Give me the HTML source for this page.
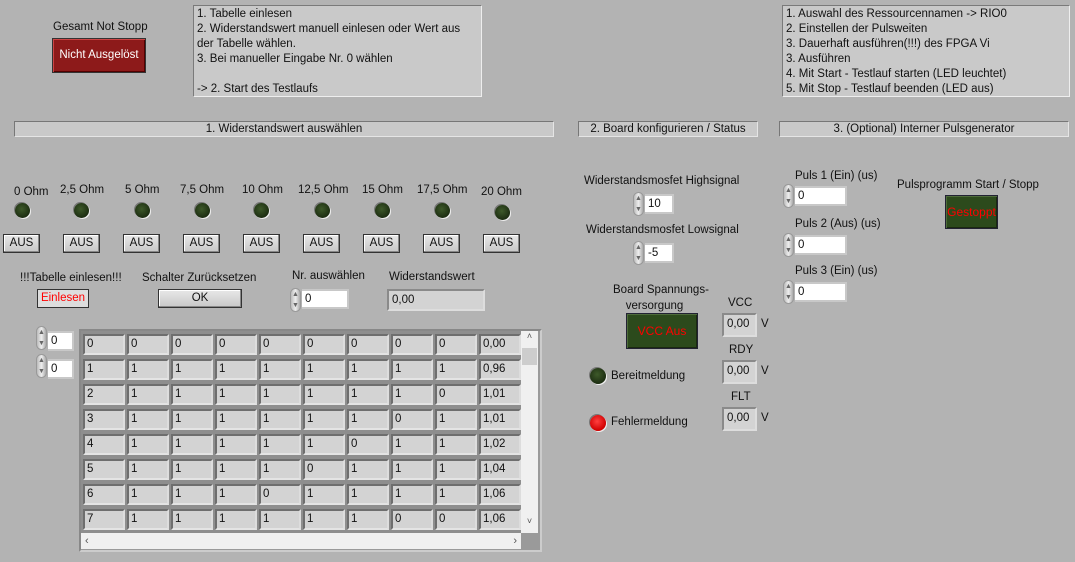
<!DOCTYPE html><html><head><meta charset="utf-8"><style>
body{margin:0;width:1075px;height:562px;background:#b3b3b3;font-family:"Liberation Sans",sans-serif;font-size:11.5px;color:#111;position:relative;overflow:hidden}
div{position:absolute;box-sizing:border-box}
.t{white-space:nowrap}
.box{background:#c9c9c9;border:1px solid #7a7a7a;border-right-color:#eee;border-bottom-color:#eee;padding:1px 3px;line-height:15px}
.hdr{background:#c9c9c9;border:1px solid #777;border-right-color:#e5e5e5;border-bottom-color:#e5e5e5;height:16px;text-align:center;line-height:14px}
.led{width:15px;height:15px;border-radius:50%;background:radial-gradient(circle at 45% 40%,#3e5a2a,#1d2e12 70%);box-shadow:1px 1px 0 #eee,-1px -1px 0 #777}
.aus{width:37px;height:19px;background:linear-gradient(#e8e8e8,#c8c8c8);border:1px solid #333;box-shadow:inset -1px -1px 0 #888,inset 1px 1px 0 #fff;text-align:center;line-height:17px}
.sp{width:11px;height:24px;border-radius:6px;background:linear-gradient(90deg,#bbb,#eee,#aaa);border:1px solid #999;font-size:7px;color:#666;text-align:center;line-height:11px}
.num{background:#fff;height:20px;border:2px solid #c8c8c8;border-left:0;padding-left:3px;line-height:17px}
.ind{background:#d3d3d3;border:2px solid #8a8a8a;border-right-color:#ddd;border-bottom-color:#ddd;height:22px;line-height:18px;padding-left:3px}
.c{width:42px;height:21px;background:#d3d3d3;border:2px solid #6e6e6e;border-right-color:#ddd;border-bottom-color:#e4e4e4;line-height:17px;padding-left:2px}
.gbtn{background:#2c4a1c;border:1px solid #223;box-shadow:inset 1px 1px 0 #4d6a3a,inset -1px -1px 0 #1a2a10;color:#f00;text-align:center;font-size:12px}
</style></head><body>
<div class="t" style="left:53px;top:21px">Gesamt Not Stopp</div>
<div style="left:52px;top:38px;width:94px;height:35px;background:#8d1a1a;border:1px solid #333;box-shadow:inset 1px 1px 0 #c44,inset -1px -1px 0 #500;color:#fff;text-align:center;line-height:33px">Nicht Ausgelöst</div>
<div class="box" style="left:193px;top:5px;width:289px;height:92px">1. Tabelle einlesen<br>2. Widerstandswert manuell einlesen oder Wert aus der Tabelle wählen.<br>3. Bei manueller Eingabe Nr. 0 wählen<br><br>-&gt; 2. Start des Testlaufs</div>
<div class="box" style="left:782px;top:5px;width:288px;height:92px">1. Auswahl des Ressourcennamen -&gt; RIO0<br>2. Einstellen der Pulsweiten<br>3. Dauerhaft ausführen(!!!) des FPGA Vi<br>3. Ausführen<br>4. Mit Start - Testlauf starten (LED leuchtet)<br>5. Mit Stop - Testlauf beenden (LED aus)</div>
<div class="hdr" style="left:14px;top:121px;width:540px">1. Widerstandswert auswählen</div>
<div class="hdr" style="left:578px;top:121px;width:180px">2. Board konfigurieren / Status</div>
<div class="hdr" style="left:779px;top:121px;width:290px">3. (Optional) Interner Pulsgenerator</div>

<div class="t" style="left:14px;top:186px">0 Ohm</div><div class="t" style="left:60px;top:184px">2,5 Ohm</div><div class="t" style="left:125px;top:184px">5 Ohm</div><div class="t" style="left:180px;top:184px">7,5 Ohm</div><div class="t" style="left:242px;top:184px">10 Ohm</div><div class="t" style="left:298px;top:184px">12,5 Ohm</div><div class="t" style="left:362px;top:184px">15 Ohm</div><div class="t" style="left:417px;top:184px">17,5 Ohm</div><div class="t" style="left:481px;top:186px">20 Ohm</div>
<div class="led" style="left:15px;top:203px"></div><div class="led" style="left:74px;top:203px"></div><div class="led" style="left:135px;top:203px"></div><div class="led" style="left:195px;top:203px"></div><div class="led" style="left:254px;top:203px"></div><div class="led" style="left:315px;top:203px"></div><div class="led" style="left:375px;top:203px"></div><div class="led" style="left:435px;top:203px"></div><div class="led" style="left:495px;top:205px"></div>
<div class="aus" style="left:3px;top:234px">AUS</div><div class="aus" style="left:63px;top:234px">AUS</div><div class="aus" style="left:123px;top:234px">AUS</div><div class="aus" style="left:183px;top:234px">AUS</div><div class="aus" style="left:243px;top:234px">AUS</div><div class="aus" style="left:303px;top:234px">AUS</div><div class="aus" style="left:363px;top:234px">AUS</div><div class="aus" style="left:423px;top:234px">AUS</div><div class="aus" style="left:483px;top:234px">AUS</div>

<div class="t" style="left:20px;top:272px">!!!Tabelle einlesen!!!</div>
<div style="left:37px;top:289px;width:52px;height:19px;background:#ddd;border:1px solid #333;color:#f00;text-align:center;line-height:17px">Einlesen</div>
<div class="t" style="left:142px;top:272px">Schalter Zurücksetzen</div>
<div class="aus" style="left:158px;top:289px;width:84px">OK</div>
<div class="t" style="left:292px;top:270px">Nr. auswählen</div>
<div class="sp" style="left:290px;top:288px">▲<br>▼</div><div class="num" style="left:302px;top:289px;width:47px">0</div>
<div class="t" style="left:389px;top:271px">Widerstandswert</div>
<div class="ind" style="left:387px;top:289px;width:98px">0,00</div>

<div class="sp" style="left:36px;top:326px">▲<br>▼</div><div class="num" style="left:48px;top:331px;width:26px">0</div>
<div class="sp" style="left:36px;top:354px">▲<br>▼</div><div class="num" style="left:48px;top:359px;width:26px">0</div>

<div style="left:79px;top:329px;width:463px;height:223px;background:#9a9a9a;border:2px solid #888;border-right-color:#ccc;border-bottom-color:#ccc"></div>
<div style="left:81px;top:331px;width:440px;height:202px;background:#8e8e8e"></div>
<div style="left:521px;top:331px;width:17px;height:202px;background:#f0f0f0;color:#555;text-align:center;font-size:9px">˄</div>
<div style="left:522px;top:348px;width:15px;height:17px;background:#cdcdcd"></div>
<div style="left:521px;top:516px;width:17px;height:16px;color:#555;text-align:center;font-size:9px">˅</div>
<div style="left:81px;top:533px;width:440px;height:16px;background:#f0f0f0;color:#555;font-size:11px;line-height:16px;padding:0 4px">‹<span style="float:right">›</span></div>

<div class="c" style="left:83px;top:334px">0</div><div class="c" style="left:127px;top:334px">0</div><div class="c" style="left:171px;top:334px">0</div><div class="c" style="left:215px;top:334px">0</div><div class="c" style="left:259px;top:334px">0</div><div class="c" style="left:303px;top:334px">0</div><div class="c" style="left:347px;top:334px">0</div><div class="c" style="left:391px;top:334px">0</div><div class="c" style="left:435px;top:334px">0</div><div class="c" style="left:479px;top:334px">0,00</div>
<div class="c" style="left:83px;top:359px">1</div><div class="c" style="left:127px;top:359px">1</div><div class="c" style="left:171px;top:359px">1</div><div class="c" style="left:215px;top:359px">1</div><div class="c" style="left:259px;top:359px">1</div><div class="c" style="left:303px;top:359px">1</div><div class="c" style="left:347px;top:359px">1</div><div class="c" style="left:391px;top:359px">1</div><div class="c" style="left:435px;top:359px">1</div><div class="c" style="left:479px;top:359px">0,96</div>
<div class="c" style="left:83px;top:384px">2</div><div class="c" style="left:127px;top:384px">1</div><div class="c" style="left:171px;top:384px">1</div><div class="c" style="left:215px;top:384px">1</div><div class="c" style="left:259px;top:384px">1</div><div class="c" style="left:303px;top:384px">1</div><div class="c" style="left:347px;top:384px">1</div><div class="c" style="left:391px;top:384px">1</div><div class="c" style="left:435px;top:384px">0</div><div class="c" style="left:479px;top:384px">1,01</div>
<div class="c" style="left:83px;top:409px">3</div><div class="c" style="left:127px;top:409px">1</div><div class="c" style="left:171px;top:409px">1</div><div class="c" style="left:215px;top:409px">1</div><div class="c" style="left:259px;top:409px">1</div><div class="c" style="left:303px;top:409px">1</div><div class="c" style="left:347px;top:409px">1</div><div class="c" style="left:391px;top:409px">0</div><div class="c" style="left:435px;top:409px">1</div><div class="c" style="left:479px;top:409px">1,01</div>
<div class="c" style="left:83px;top:434px">4</div><div class="c" style="left:127px;top:434px">1</div><div class="c" style="left:171px;top:434px">1</div><div class="c" style="left:215px;top:434px">1</div><div class="c" style="left:259px;top:434px">1</div><div class="c" style="left:303px;top:434px">1</div><div class="c" style="left:347px;top:434px">0</div><div class="c" style="left:391px;top:434px">1</div><div class="c" style="left:435px;top:434px">1</div><div class="c" style="left:479px;top:434px">1,02</div>
<div class="c" style="left:83px;top:459px">5</div><div class="c" style="left:127px;top:459px">1</div><div class="c" style="left:171px;top:459px">1</div><div class="c" style="left:215px;top:459px">1</div><div class="c" style="left:259px;top:459px">1</div><div class="c" style="left:303px;top:459px">0</div><div class="c" style="left:347px;top:459px">1</div><div class="c" style="left:391px;top:459px">1</div><div class="c" style="left:435px;top:459px">1</div><div class="c" style="left:479px;top:459px">1,04</div>
<div class="c" style="left:83px;top:484px">6</div><div class="c" style="left:127px;top:484px">1</div><div class="c" style="left:171px;top:484px">1</div><div class="c" style="left:215px;top:484px">1</div><div class="c" style="left:259px;top:484px">0</div><div class="c" style="left:303px;top:484px">1</div><div class="c" style="left:347px;top:484px">1</div><div class="c" style="left:391px;top:484px">1</div><div class="c" style="left:435px;top:484px">1</div><div class="c" style="left:479px;top:484px">1,06</div>
<div class="c" style="left:83px;top:509px">7</div><div class="c" style="left:127px;top:509px">1</div><div class="c" style="left:171px;top:509px">1</div><div class="c" style="left:215px;top:509px">1</div><div class="c" style="left:259px;top:509px">1</div><div class="c" style="left:303px;top:509px">1</div><div class="c" style="left:347px;top:509px">1</div><div class="c" style="left:391px;top:509px">0</div><div class="c" style="left:435px;top:509px">0</div><div class="c" style="left:479px;top:509px">1,06</div>

<div class="t" style="left:584px;top:175px">Widerstandsmosfet Highsignal</div>
<div class="sp" style="left:633px;top:192px">▲<br>▼</div><div class="num" style="left:645px;top:194px;width:29px">10</div>
<div class="t" style="left:586px;top:224px">Widerstandsmosfet Lowsignal</div>
<div class="sp" style="left:633px;top:241px">▲<br>▼</div><div class="num" style="left:645px;top:243px;width:29px">-5</div>
<div class="t" style="left:613px;top:282px;line-height:16px">Board Spannungs-<br>&nbsp;&nbsp;&nbsp;&nbsp;versorgung</div>
<div class="gbtn" style="left:626px;top:313px;width:72px;height:36px;line-height:34px">VCC Aus</div>
<div class="t" style="left:728px;top:297px">VCC</div>
<div class="ind" style="left:722px;top:313px;width:35px;height:24px;line-height:19px">0,00</div><div class="t" style="left:761px;top:318px">V</div>
<div class="t" style="left:729px;top:344px">RDY</div>
<div class="ind" style="left:722px;top:360px;width:35px;height:24px;line-height:19px">0,00</div><div class="t" style="left:761px;top:365px">V</div>
<div class="t" style="left:731px;top:391px">FLT</div>
<div class="ind" style="left:722px;top:407px;width:35px;height:24px;line-height:19px">0,00</div><div class="t" style="left:761px;top:412px">V</div>
<div class="led" style="left:590px;top:368px;width:16px;height:16px"></div><div class="t" style="left:611px;top:370px">Bereitmeldung</div>
<div class="led" style="left:590px;top:415px;width:16px;height:16px;background:radial-gradient(circle at 45% 40%,#ff4040,#d00000 70%)"></div><div class="t" style="left:611px;top:416px">Fehlermeldung</div>

<div class="t" style="left:795px;top:170px">Puls 1 (Ein) (us)</div>
<div class="sp" style="left:783px;top:184px">▲<br>▼</div><div class="num" style="left:795px;top:186px;width:52px">0</div>
<div class="t" style="left:795px;top:218px">Puls 2 (Aus) (us)</div>
<div class="sp" style="left:783px;top:233px">▲<br>▼</div><div class="num" style="left:795px;top:235px;width:52px">0</div>
<div class="t" style="left:795px;top:265px">Puls 3 (Ein) (us)</div>
<div class="sp" style="left:783px;top:280px">▲<br>▼</div><div class="num" style="left:795px;top:282px;width:52px">0</div>
<div class="t" style="left:897px;top:179px">Pulsprogramm Start / Stopp</div>
<div class="gbtn" style="left:945px;top:195px;width:53px;height:34px;line-height:32px">Gestoppt</div>
</body></html>
